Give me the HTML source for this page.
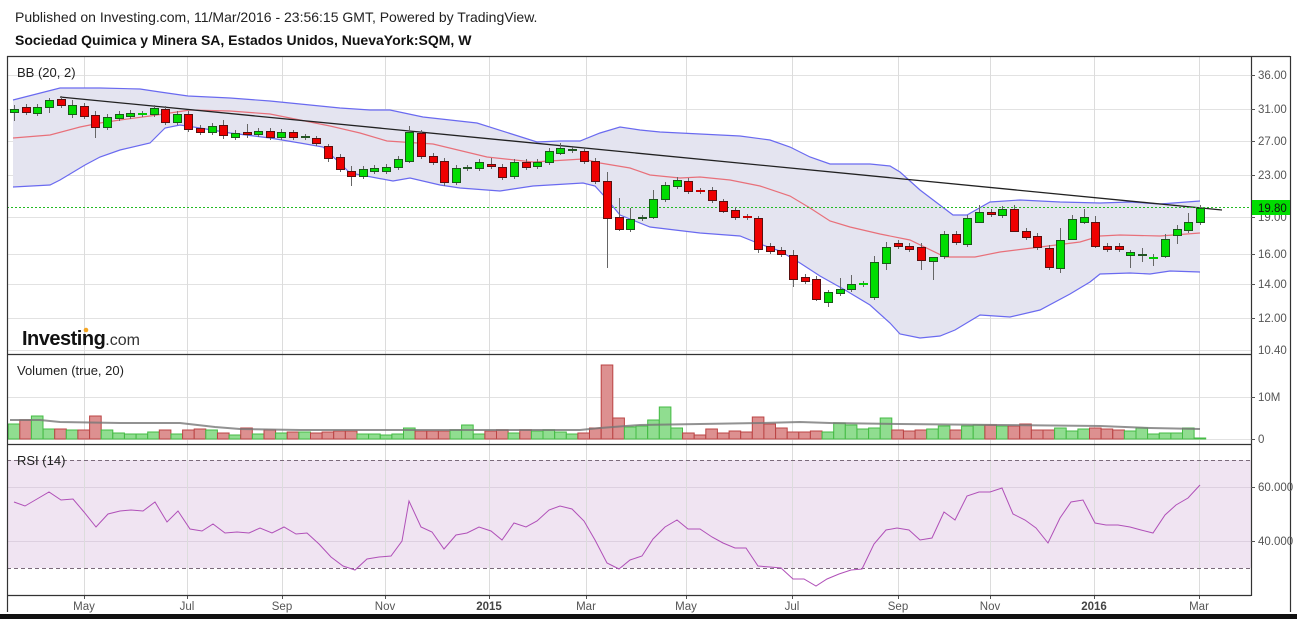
<!DOCTYPE html>
<html><head><meta charset="utf-8">
<style>
html,body{margin:0;padding:0;background:#fff;width:1297px;height:619px;overflow:hidden;font-family:"Liberation Sans",Arial,sans-serif}
.h1{position:absolute;left:15px;top:9px;font-size:14px;color:#222}
.h2{position:absolute;left:15px;top:32px;font-size:14px;font-weight:bold;color:#111}
svg{position:absolute;left:0;top:0}
</style></head><body>
<div class="h1">Published on Investing.com, 11/Mar/2016 - 23:56:15 GMT, Powered by TradingView.</div>
<div class="h2">Sociedad Quimica y Minera SA, Estados Unidos, NuevaYork:SQM, W</div>
<svg id="s" width="1297" height="619" xmlns="http://www.w3.org/2000/svg" font-family="Liberation Sans, Arial, sans-serif">
<g stroke="#e2e2e2" stroke-width="1" id="grid">
<line x1="7" y1="75.5" x2="1251" y2="75.5"/><line x1="7" y1="109.5" x2="1251" y2="109.5"/>
<line x1="7" y1="141.5" x2="1251" y2="141.5"/><line x1="7" y1="175.5" x2="1251" y2="175.5"/>
<line x1="7" y1="217.5" x2="1251" y2="217.5"/><line x1="7" y1="254.5" x2="1251" y2="254.5"/>
<line x1="7" y1="284.5" x2="1251" y2="284.5"/><line x1="7" y1="318.5" x2="1251" y2="318.5"/>
<line x1="7" y1="350.5" x2="1251" y2="350.5"/>
<line x1="7" y1="397.5" x2="1251" y2="397.5"/><line x1="7" y1="439.5" x2="1251" y2="439.5"/>
</g>
<rect x="7" y="460" width="1244" height="108" fill="#f0e4f2"/>
<g stroke="#ddd0e0"><line x1="7" y1="487.5" x2="1251" y2="487.5"/><line x1="7" y1="541.5" x2="1251" y2="541.5"/></g>
<g id="vg" stroke="#dcdcdc"></g>
<g stroke="#7a6a7a" stroke-dasharray="4,3"><line x1="7" y1="460.5" x2="1251" y2="460.5"/><line x1="7" y1="568.5" x2="1251" y2="568.5"/></g>
<polygon fill="#e4e4f0" id="bbfill"/>
<polyline id="up" fill="none" stroke="#6a6af0" stroke-width="1.2"/>
<polyline id="lo" fill="none" stroke="#6a6af0" stroke-width="1.2"/>
<polyline id="mid" fill="none" stroke="#e8707a" stroke-width="1.2"/>
<line x1="60" y1="97" x2="1222" y2="210" stroke="#222" stroke-width="1.3"/>
<line x1="7" y1="207.5" x2="1251" y2="207.5" stroke="#22bb22" stroke-dasharray="2,2"/>
<g id="cd"></g>
<g id="vol"></g>
<polyline id="vma" fill="none" stroke="#777" stroke-width="2" opacity="0.8"/>
<polyline id="rsi" fill="none" stroke="#b050b8" stroke-width="1"/>
<text x="17" y="77" font-size="13" fill="#222">BB (20, 2)</text>
<text x="17" y="375" font-size="13" fill="#222">Volumen (true, 20)</text>
<text x="17" y="465" font-size="13" fill="#222">RSI (14)</text>
<text x="22" y="345" font-size="20" font-weight="bold" fill="#111" letter-spacing="-0.5">Investing<tspan font-size="16" font-weight="normal" fill="#333" letter-spacing="0">.com</tspan></text>
<circle cx="86" cy="330" r="2.3" fill="#f5a623"/>
<g stroke="#333" fill="none" stroke-width="1.2">
<line x1="7" y1="56.5" x2="1290" y2="56.5"/>
<line x1="7.5" y1="56" x2="7.5" y2="612"/>
<line x1="1290.5" y1="56" x2="1290.5" y2="612"/>
<line x1="1251.5" y1="56" x2="1251.5" y2="596"/>
<line x1="7" y1="354.5" x2="1251" y2="354.5"/>
<line x1="7" y1="444.5" x2="1251" y2="444.5"/>
<line x1="7" y1="595.5" x2="1251" y2="595.5"/>
</g>
<rect x="0" y="614" width="1297" height="5" fill="#111"/>
<g font-size="11.5" fill="#555" id="ax">
<text x="1258" y="79">36.00</text><text x="1258" y="113">31.00</text><text x="1258" y="145">27.00</text>
<text x="1258" y="179">23.00</text><text x="1258" y="221">19.00</text><text x="1258" y="258">16.00</text>
<text x="1258" y="288">14.00</text><text x="1258" y="322">12.00</text><text x="1258" y="354">10.40</text>
<text x="1258" y="401">10M</text><text x="1258" y="443">0</text>
<text x="1258" y="491">60.000</text><text x="1258" y="545">40.000</text>
</g>
<g stroke="#555"><line x1="1251" y1="75.5" x2="1255" y2="75.5"/><line x1="1251" y1="109.5" x2="1255" y2="109.5"/><line x1="1251" y1="141.5" x2="1255" y2="141.5"/><line x1="1251" y1="175.5" x2="1255" y2="175.5"/><line x1="1251" y1="217.5" x2="1255" y2="217.5"/><line x1="1251" y1="254.5" x2="1255" y2="254.5"/><line x1="1251" y1="284.5" x2="1255" y2="284.5"/><line x1="1251" y1="318.5" x2="1255" y2="318.5"/><line x1="1251" y1="397.5" x2="1255" y2="397.5"/><line x1="1251" y1="439.5" x2="1255" y2="439.5"/><line x1="1251" y1="487.5" x2="1255" y2="487.5"/><line x1="1251" y1="541.5" x2="1255" y2="541.5"/></g>
<rect x="1252" y="200" width="38" height="15" fill="#00dd00"/>
<text x="1258" y="212" font-size="11.5" fill="#111">19.80</text>
<g font-size="11.5" fill="#555" text-anchor="middle" id="xl">
<text x="84" y="610">May</text><text x="187" y="610">Jul</text><text x="282" y="610">Sep</text><text x="385" y="610">Nov</text>
<text x="489" y="610" font-weight="bold" fill="#444">2015</text><text x="586" y="610">Mar</text><text x="686" y="610">May</text>
<text x="792" y="610">Jul</text><text x="898" y="610">Sep</text><text x="990" y="610">Nov</text>
<text x="1094" y="610" font-weight="bold" fill="#444">2016</text><text x="1199" y="610">Mar</text>
</g>
</svg>
<script>
var NS="http://www.w3.org/2000/svg";
function el(p,t,a){var e=document.createElementNS(NS,t);for(var k in a)e.setAttribute(k,a[k]);p.appendChild(e);return e;}
var vx=[84,187,282,385,489,586,686,792,898,990,1094,1199],vg=document.getElementById('vg');
vx.forEach(function(x){el(vg,'line',{x1:x+.5,y1:56,x2:x+.5,y2:595});el(vg,'line',{x1:x+.5,y1:595,x2:x+.5,y2:599,stroke:'#555'});});
function pts(a){return a.map(function(p){return p[0]+','+p[1]}).join(' ');}
var up=[[13,100],[60,88],[100,88],[140,89],[160,92],[188,96],[230,98],[270,101],[300,104],[340,108],[370,110],[390,110],[423,117],[477,123],[537,142],[560,141],[580,141],[600,133],[620,127],[640,130],[660,132],[700,134],[740,136],[770,140],[790,147],[810,157],[830,164],[870,164],[890,166],[900,172],[920,190],[953,215],[967,215],[990,202],[1020,200],[1060,202],[1100,203],[1130,202],[1160,204],[1200,201]];
var lo=[[13,187],[50,185],[60,180],[85,165],[100,157],[120,150],[150,143],[165,128],[180,125],[200,128],[230,133],[270,138],[300,143],[323,147],[350,173],[393,181],[410,178],[440,185],[460,188],[500,191],[533,186],[583,183],[595,186],[605,197],[620,215],[650,227],[700,233],[740,236],[760,244],[780,251],[800,263],[820,276],[845,290],[870,305],[890,323],[900,334],[920,338],[940,336],[955,330],[980,315],[1010,317],[1040,310],[1070,294],[1090,282],[1100,274],[1130,273],[1150,274],[1170,271],[1200,272]];
var mid=[[13,138],[50,135],[80,127],[100,123],[120,120],[150,116],[190,110],[230,111],[270,114],[300,120],[330,126],[360,133],[387,141],[433,144],[487,157],[533,162],[583,159],[600,163],[630,168],[650,175],[680,178],[700,177],[730,180],[760,186],[790,196],[810,208],[830,221],[850,227],[880,234],[910,240],[945,257],[975,257],[1000,252],[1040,247],[1080,242],[1100,236],[1120,235],[1160,236],[1200,233]];
document.getElementById('up').setAttribute('points',pts(up));
document.getElementById('lo').setAttribute('points',pts(lo));
document.getElementById('mid').setAttribute('points',pts(mid));
document.getElementById('bbfill').setAttribute('points',pts(up.concat(lo.slice().reverse())));
var C=[[109,112,'g'],[107,112,'r'],[107,113,'g'],[100,107,'g'],[99,105,'r'],[105,114,'g'],[106,116,'r'],[115,127,'r'],[117,127,'g'],[114,118,'g'],[113,116,'g'],[114,114,'l'],[108,114,'g'],[109,122,'r'],[114,122,'g'],[114,129,'r'],[128,132,'r'],[126,132,'g'],[125,135,'r'],[133,137,'g'],[132,134,'r'],[131,134,'g'],[131,137,'r'],[132,137,'g'],[132,137,'r'],[137,137,'d'],[138,143,'r'],[146,158,'r'],[157,169,'r'],[171,176,'r'],[169,176,'g'],[168,171,'g'],[167,171,'g'],[159,167,'g'],[132,161,'g'],[133,156,'r'],[156,162,'r'],[161,182,'r'],[168,182,'g'],[168,168,'d'],[162,168,'g'],[164,166,'r'],[167,177,'r'],[162,176,'g'],[162,167,'r'],[162,166,'g'],[151,162,'g'],[148,153,'g'],[150,150,'d'],[151,161,'r'],[161,181,'r'],[181,218,'r'],[217,229,'r'],[219,229,'g'],[218,218,'d'],[199,217,'g'],[185,199,'g'],[180,186,'g'],[181,191,'r'],[191,191,'r'],[190,200,'r'],[201,211,'r'],[210,217,'r'],[217,217,'r'],[218,249,'r'],[246,251,'r'],[250,254,'r'],[255,279,'r'],[277,281,'r'],[279,299,'r'],[292,302,'g'],[289,293,'g'],[284,289,'g'],[284,284,'l'],[262,297,'g'],[247,263,'g'],[243,246,'r'],[246,249,'r'],[247,260,'r'],[257,261,'g'],[234,256,'g'],[234,242,'r'],[218,244,'g'],[212,222,'g'],[212,214,'r'],[209,215,'g'],[209,231,'r'],[231,237,'r'],[236,247,'r'],[248,267,'r'],[240,268,'g'],[219,239,'g'],[217,222,'g'],[222,246,'r'],[246,249,'r'],[246,249,'r'],[252,255,'g'],[255,255,'d'],[258,258,'l'],[239,256,'g'],[229,235,'g'],[222,230,'g'],[208,222,'g']];
var wk={7:[111,138],29:[166,186],34:[126,163],51:[172,268],52:[198,231],55:[190,219],67:[250,287],89:[245,270],90:[228,273],86:[205,232],0:[105,121],3:[98,113],5:[100,118],18:[120,139],20:[124,138],53:[208,232],60:[187,203],64:[216,253],61:[199,213],74:[256,300],75:[242,270],78:[243,270],79:[257,280],82:[215,247],83:[205,223],96:[250,268],97:[248,262],98:[254,266],99:[234,258],100:[225,244],101:[213,233],102:[205,225],93:[216,248],91:[215,240],92:[209,224],71:[278,296],72:[275,292],70:[290,307],69:[276,301],47:[143,155],41:[158,169],24:[130,140],26:[136,146],27:[144,162],37:[158,186]};
var cd=document.getElementById('cd'),S=11.627;
C.forEach(function(c,i){var x=Math.round(14+i*S);var w=wk[i]||[c[0]-3,c[1]+3];
el(cd,'line',{x1:x+.5,y1:w[0],x2:x+.5,y2:w[1],stroke:'#666'});
var f={g:'#00dd00',r:'#ee0000',d:'#224422',l:'#00dd00'}[c[2]];var st={g:'#1a5a1a',r:'#5a1010',d:'#224422',l:'#00cc00'}[c[2]];
if(c[1]-c[0]<1){el(cd,'rect',{x:x-4,y:c[0]-1,width:9,height:2,fill:c[2]=='d'?'#225522':(c[2]=='r'?'#cc0000':'#00cc00')});}
else el(cd,'rect',{x:x-4+.5,y:c[0]+.5,width:8,height:c[1]-c[0],fill:f,stroke:st,'stroke-width':1});
});
var vt=[424,420,416,429,429,430,430,416,430,433,434,434,432,430,434,430,429,430,433,435,428,434,430,433,432,432,433,432,431,431,434,434,435,434,428,431,431,431,430,425,434,431,430,433,430,431,430,432,434,433,428,365,418,427,426,420,407,428,433,435,429,433,431,432,417,424,428,432,432,431,432,423,425,429,428,418,430,431,430,429,426,430,426,425,425,426,426,424,430,430,428,431,429,428,429,430,431,428,434,433,433,428,438];
var vol=document.getElementById('vol');
vt.forEach(function(t,i){var x=14+i*S-S/2;var g=C[i][2]!='r';
el(vol,'rect',{x:x.toFixed(1),y:t,width:S.toFixed(1),height:439-t,fill:g?'#90dd90':'#dd9090',stroke:g?'#44bb44':'#bb4444','stroke-width':1});});
document.getElementById('vma').setAttribute('points',pts([[10,420],[40,420],[60,422],[120,423],[180,423],[215,427],[240,429],[300,430],[500,430],[580,430],[600,428],[640,425],[700,424],[760,423],[800,422],[830,423],[900,424],[1000,425],[1100,426],[1150,428],[1200,429]]));
document.getElementById('rsi').setAttribute('points',pts([[14,502],[25,506],[37,499],[49,492],[61,500],[73,499],[84,512],[96,527],[108,514],[120,511],[131,510],[143,511],[155,502],[167,522],[178,511],[190,529],[202,531],[213,524],[225,533],[237,532],[249,533],[260,528],[272,533],[284,527],[296,534],[307,533],[319,544],[331,557],[343,566],[355,570],[367,559],[379,557],[391,556],[402,541],[409,501],[421,527],[432,532],[444,549],[456,535],[467,533],[479,527],[491,531],[502,540],[514,523],[526,527],[537,521],[549,510],[560,506],[572,509],[584,521],[595,540],[607,563],[619,569],[630,560],[642,556],[653,539],[665,527],[677,520],[688,529],[700,529],[712,537],[723,543],[735,548],[746,548],[758,566],[770,567],[781,568],[793,579],[804,579],[816,586],[827,579],[839,574],[851,570],[862,569],[874,544],[886,530],[897,528],[909,530],[920,540],[932,538],[944,512],[955,520],[967,496],[979,492],[990,492],[1002,488],[1013,514],[1025,520],[1036,528],[1048,543],[1060,518],[1071,502],[1083,500],[1095,523],[1106,525],[1118,525],[1130,527],[1141,530],[1153,533],[1165,515],[1176,505],[1188,498],[1200,485]]));
</script>
</body></html>
